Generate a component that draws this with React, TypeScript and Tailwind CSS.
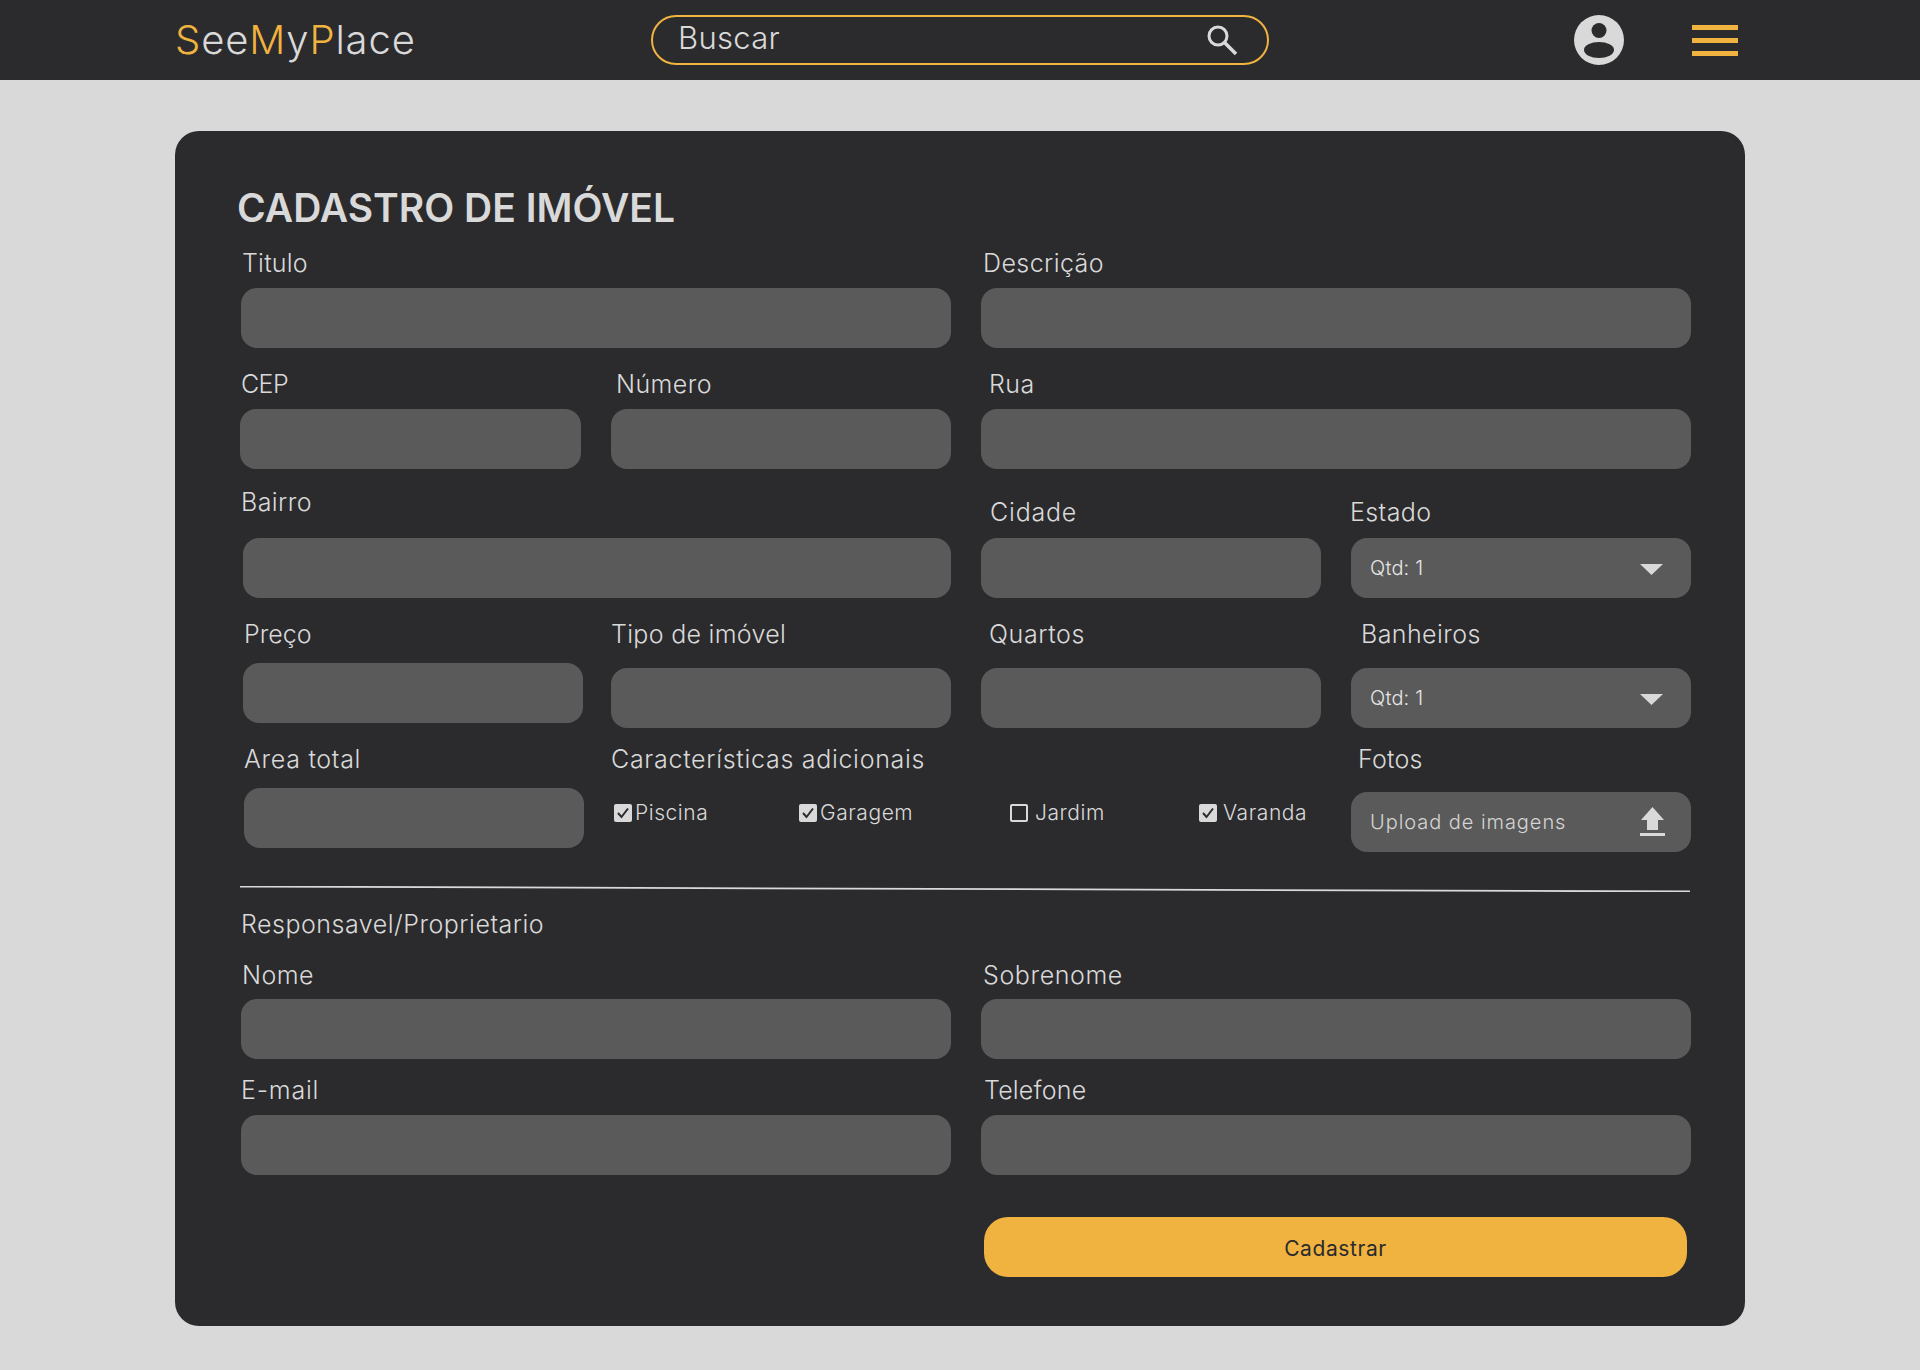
import React from 'react';

const INPUT = 'h-[60px] w-full rounded-2xl bg-[#5a5a5a]';

const Triangle = () => (
    <svg width="23" height="11" viewBox="0 0 23 11" className="mr-[3px] mt-[2px]">
        <path d="M0 0h23L11.5 11z" fill="#d9d9d9" />
    </svg>
);

type FieldProps = {
    label: string;
    labelClass?: string;
    gap: string;
    className?: string;
    children?: React.ReactNode;
};

const Field = ({ label, labelClass = 'tracking-[0.42px]', gap, className = '', children }: FieldProps) => (
    <div className={`flex flex-col ${className}`}>
        <label className={`h-8 text-[25px] font-light leading-[33px] whitespace-nowrap ${labelClass}`}>{label}</label>
        <div className={gap}>{children ?? <div className={INPUT} />}</div>
    </div>
);

const Select = () => (
    <div className={`${INPUT} flex items-center justify-between pl-[19px] pr-[25px] text-[20px] font-light tracking-[0.2px] text-[#e6e6e6]`}>
        <span>Qtd: 1</span>
        <Triangle />
    </div>
);

const Check = ({ label, checked, width, textGap }: { label: string; checked: boolean; width: string; textGap: string }) => (
    <div className={`flex items-center ${width} ${textGap}`}>
        {checked ? (
            <svg width="18" height="18" viewBox="0 0 18 18" className="shrink-0">
                <rect width="18" height="18" rx="2" fill="#d9d9d9" />
                <path d="M4 9l3.5 4L14 4.5" fill="none" stroke="#2b2b2d" strokeWidth="2" />
            </svg>
        ) : (
            <span className="h-[18px] w-[18px] shrink-0 rounded-[2px] border-2 border-[#d9d9d9]" />
        )}
        <span className="whitespace-nowrap text-[21px] font-light leading-7 tracking-[0.55px]">{label}</span>
    </div>
);

export default function App() {
    return (
        <div className="min-h-[1370px] bg-[#d9d9d9] font-['Inter',sans-serif] text-[#d9d9d9]">
            <header className="flex h-20 items-center bg-[#2b2b2d] pl-[175px]">
                <div className="w-[476px] text-[40px] font-light tracking-[0.85px]">
                    <span className="text-[#f0b33f]">S</span>ee<span className="text-[#f0b33f]">M</span>y<span className="text-[#f0b33f]">P</span>lace
                </div>
                <div className="flex h-[50px] w-[618px] items-center justify-between rounded-full border-2 border-[#f0b33f] pl-[25px] pr-[29px] text-[31px] font-light">
                    <span className="-mt-[3px] tracking-[0.3px]">Buscar</span>
                    <svg width="32" height="32" viewBox="0 0 32 32">
                        <circle cx="12" cy="12" r="9" fill="none" stroke="#d9d9d9" strokeWidth="3" />
                        <path d="M18.5 18.5L30 30" stroke="#d9d9d9" strokeWidth="3.5" />
                    </svg>
                </div>
                <svg width="50" height="50" viewBox="0 0 50 50" className="ml-[305px]">
                    <circle cx="25" cy="25" r="25" fill="#d9d9d9" />
                    <circle cx="25" cy="15.5" r="7.5" fill="#2b2b2d" />
                    <ellipse cx="25" cy="35" rx="15" ry="8" fill="#2b2b2d" />
                </svg>
                <div className="ml-[68px] flex w-[46px] flex-col gap-2">
                    <div className="h-[5px] bg-[#f0b33f]" />
                    <div className="h-[5px] bg-[#f0b33f]" />
                    <div className="h-[5px] bg-[#f0b33f]" />
                </div>
            </header>

            <main className="ml-[175px] mt-[51px] h-[1195px] w-[1570px] rounded-3xl bg-[#2b2b2d] pl-[66px] pr-[54px] pt-[53px]">
                <h1 className="-ml-[4px] h-12 text-[39px] font-semibold leading-[48px]">CADASTRO DE IMÓVEL</h1>

                <div className="mt-[15px] grid grid-cols-2 items-end gap-[30px]">
                    <Field label="Titulo" labelClass="ml-px tracking-[0.2px]" gap="mt-[9px]" />
                    <Field label="Descrição" labelClass="ml-[2px] tracking-[0.42px]" gap="mt-[9px]" />
                </div>

                <div className="mt-5 grid grid-cols-4 items-end gap-[30px]">
                    <Field label="CEP" labelClass="tracking-[-0.6px]" gap="mt-[9px] -ml-px" />
                    <Field label="Número" labelClass="ml-[5px] tracking-[0.42px]" gap="mt-[9px]" />
                    <Field label="Rua" labelClass="ml-[8px] tracking-[0.42px]" gap="mt-[9px]" className="col-span-2" />
                </div>

                <div className="mt-[17px] grid grid-cols-4 items-end gap-[30px]">
                    <Field label="Bairro" gap="mt-5 ml-[2px]" className="col-span-2" />
                    <Field label="Cidade" labelClass="ml-[9px] tracking-[0.8px]" gap="mt-[10px]" />
                    <Field label="Estado" labelClass="-ml-px tracking-[0.42px]" gap="mt-[10px]">
                        <Select />
                    </Field>
                </div>

                <div className="mt-5 grid grid-cols-4 items-end gap-[30px]">
                    <Field label="Preço" labelClass="ml-[3px] tracking-[0px]" gap="mt-[13px] mb-[5px] ml-[2px] w-[340px]" />
                    <Field label="Tipo de imóvel" labelClass="tracking-[0.3px]" gap="mt-[18px]" />
                    <Field label="Quartos" labelClass="ml-[8px] tracking-[0.6px]" gap="mt-[18px]" />
                    <Field label="Banheiros" labelClass="ml-[10px] tracking-[0.42px]" gap="mt-[18px]">
                        <Select />
                    </Field>
                </div>

                <div className="mt-[15px] grid grid-cols-4 items-end gap-[30px]">
                    <Field label="Area total" labelClass="ml-[3px] tracking-[0.7px]" gap="mt-[13px] mb-[4px] ml-[3px] w-[340px]" />
                    <Field label="Características adicionais" labelClass="tracking-[0.7px]" gap="mt-[17px]" className="col-span-2">
                        <div className="flex h-[60px] items-start pl-[3px] pt-[7px]">
                            <Check label="Piscina" checked width="w-[185px]" textGap="gap-[3px]" />
                            <Check label="Garagem" checked width="w-[211px]" textGap="gap-[3px]" />
                            <Check label="Jardim" checked={false} width="w-[189px]" textGap="gap-[7px]" />
                            <Check label="Varanda" checked width="w-[120px]" textGap="gap-[6px]" />
                        </div>
                    </Field>
                    <Field label="Fotos" labelClass="ml-[7px] tracking-[0.2px]" gap="mt-[17px]">
                        <div className={`${INPUT} flex items-center justify-between pl-[19px] pr-[26px] text-[20px] font-light tracking-[0.95px] text-[#d4d4d4]`}>
                            <span>Upload de imagens</span>
                            <svg width="25" height="29" viewBox="0 0 25 29" className="mb-[2px]">
                                <path d="M12.5 0L24 13h-6v10H7V13H1z" fill="#d9d9d9" />
                                <rect y="26" width="25" height="3" fill="#d9d9d9" />
                            </svg>
                        </div>
                    </Field>
                </div>

                <svg width="1450" height="6" viewBox="0 0 1450 6" className="-ml-px mt-[34px] block">
                    <path d="M0 .5L1450 5.5" stroke="#d9d9d9" strokeWidth="1.8" />
                </svg>

                <p className="mt-4 h-8 text-[25px] font-light leading-[33px] tracking-[0.5px]">Responsavel/Proprietario</p>

                <div className="mt-[19px] grid grid-cols-2 items-end gap-[30px]">
                    <Field label="Nome" labelClass="ml-px tracking-[0.42px]" gap="mt-2" />
                    <Field label="Sobrenome" labelClass="ml-[2px] tracking-[0.6px]" gap="mt-2" />
                </div>

                <div className="mt-[15px] grid grid-cols-2 items-end gap-[30px]">
                    <Field label="E-mail" labelClass="tracking-[0.8px]" gap="mt-[9px]" />
                    <Field label="Telefone" labelClass="ml-[3px] tracking-[0.2px]" gap="mt-[9px]" />
                </div>

                <div className="mt-[42px] grid grid-cols-2 gap-[30px]">
                    <button className="col-start-2 ml-[3px] h-[60px] w-[703px] rounded-3xl bg-[#f0b33f] pt-[3px] text-[21px] tracking-[0.6px] text-[#2b2b2d]">
                        Cadastrar
                    </button>
                </div>
            </main>
        </div>
    );
}
